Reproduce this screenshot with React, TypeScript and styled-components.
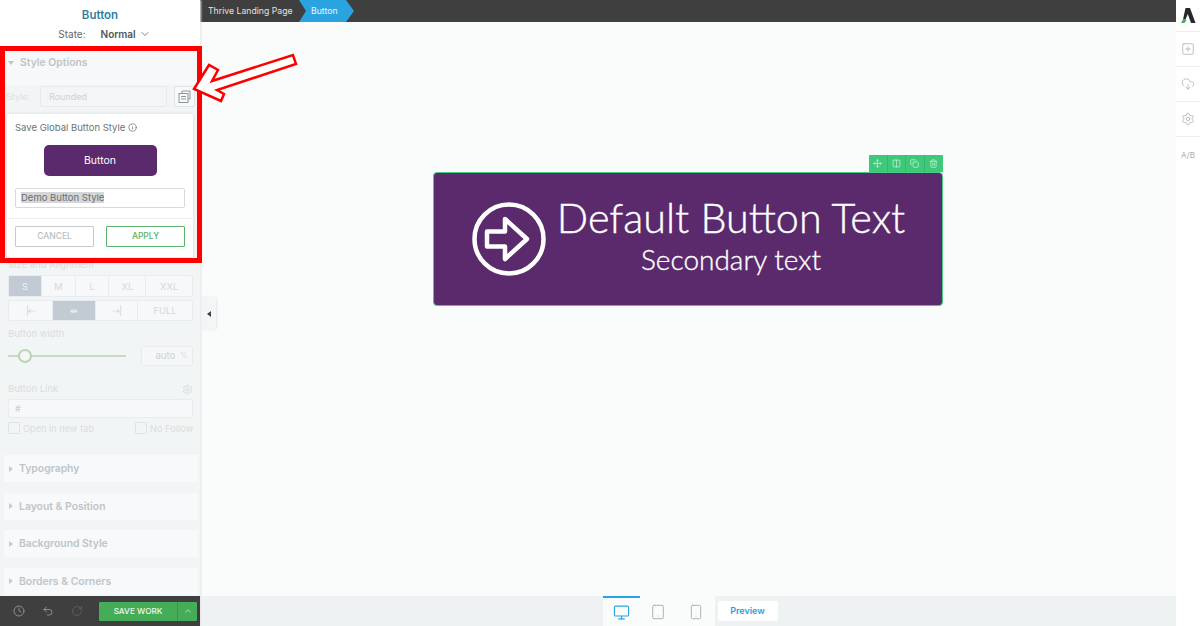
import React from "react";
import styled, { createGlobalStyle } from "styled-components";
import {
  ChevronDown, ChevronUp, Clock, Columns2, Copy, Info, Monitor, Move, RotateCw, Settings, Smartphone,
  SquarePlus, Tablet, Trash2, Undo2, CloudDownload,
} from "lucide-react";

const Global = createGlobalStyle`
  html, body { margin: 0; height: 100%; overflow: hidden; background: #fafbfb; }
  #root { height: 100%; }
  * { box-sizing: border-box; }
  body { font-family: "Inter", "Roboto", "Liberation Sans", sans-serif; }
`;

const Page = styled.div`
  display: flex;
  width: 1200px;
  height: 626px;
  position: relative;
  overflow: hidden;
`;

const Sidebar = styled.aside`
  width: 200px;
  flex: none;
  display: flex;
  flex-direction: column;
  background: #f2f5f5;
  position: relative;
  box-shadow: 1px 0 2px #e3e6e7;
  z-index: 2;
`;

const Header = styled.header`
  height: 46px;
  background: #fff;
  display: flex;
  flex-direction: column;
  align-items: center;
  padding-top: 9px;
  flex: none;
`;

const Title = styled.div`
  font-size: 11.5px;
  line-height: 13px;
  font-weight: 600;
  color: #2f7f9f;
`;

const StateRow = styled.div`
  display: flex;
  align-items: center;
  margin-top: 6px;
  font-size: 10px;
  line-height: 12px;
  color: #62686c;
  gap: 15px;
  padding-left: 9px;
  b {
    font-weight: 600;
    color: #50565a;
    display: inline-flex;
    align-items: center;
    gap: 3px;
  }
`;

const Scroll = styled.div`
  flex: 1;
  overflow: hidden;
  min-height: 0;
`;

const StylePanel = styled.section`
  background: #f6f8f9;
  margin: 4px 2px 0 4px;
  height: 35px;
  padding: 6px 0 0 4px;
`;

const PanelHead = styled.div`
  display: flex;
  align-items: center;
  gap: 6px;
  font-size: 10.4px;
  line-height: 13px;
  font-weight: 600;
  color: #bfc5c9;
`;

const Caret = styled.i<{ $open?: boolean }>`
  width: 0;
  height: 0;
  display: block;
  ${(p) =>
    p.$open
      ? "border-left: 3px solid transparent; border-right: 3px solid transparent; border-top: 4px solid #bfc5c9;"
      : "border-top: 3px solid transparent; border-bottom: 3px solid transparent; border-left: 4px solid #c6cbcf;"}
`;

const StyleRow = styled.div`
  display: flex;
  align-items: center;
  padding: 0 5px 0 6px;
  height: 22px;
`;

const FaintLabel = styled.span`
  font-size: 9px;
  color: #dde1e3;
  width: 34px;
`;

const FaintInput = styled.div`
  width: 127px;
  height: 21px;
  background: #f3f5f6;
  border: 1px solid #e7eaec;
  border-radius: 2px;
  font-size: 9px;
  line-height: 19px;
  padding-left: 8px;
  color: #ced3d6;
`;

const IconSquare = styled.div`
  width: 21px;
  height: 21px;
  margin-left: 7px;
  background: #f8f9fa;
  border: 1px solid #dfe3e5;
  border-radius: 2px;
  display: flex;
  align-items: center;
  justify-content: center;
  color: #8f969b;
`;

const Options = styled.div`
  padding: 0 7px 0 8px;
`;

const SpacerUnderPopup = styled.div`
  height: 152px;
`;

const FieldLabel = styled.div<{ $mt?: number }>`
  font-size: 9.5px;
  line-height: 12px;
  color: #d9dde0;
  display: flex;
  justify-content: space-between;
  align-items: center;
  margin-top: ${(p) => p.$mt ?? 0}px;
`;

const Segments = styled.div<{ $h: number; $mt: number }>`
  display: flex;
  height: ${(p) => p.$h}px;
  margin-top: ${(p) => p.$mt}px;
  background: #f6f8f9;
  border: 1px solid #e9ecee;
  border-radius: 2px;
`;

const Segment = styled.div<{ $w: number; $on?: boolean }>`
  width: ${(p) => p.$w}px;
  display: flex;
  align-items: center;
  justify-content: center;
  font-size: 9.5px;
  color: ${(p) => (p.$on ? "#eef1f3" : "#d5d9dc")};
  background: ${(p) => (p.$on ? "#c2cbd3" : "transparent")};
  border-right: 1px solid #e9ecee;
  &:last-child { border-right: 0; }
`;

const SliderRow = styled.div`
  display: flex;
  align-items: center;
  margin-top: 6px;
  height: 20px;
`;

const Track = styled.div`
  width: 118px;
  height: 2px;
  background: #c5dcc3;
  position: relative;
`;

const Knob = styled.span`
  position: absolute;
  left: 10px;
  top: -6px;
  width: 14px;
  height: 14px;
  border-radius: 50%;
  border: 2px solid #b9d4b7;
  background: #f5f7f7;
`;

const WidthBox = styled.div`
  margin-left: 15px;
  width: 52px;
  height: 20px;
  background: #f5f7f8;
  border: 1px solid #e9ecee;
  border-radius: 2px;
  font-size: 9.5px;
  line-height: 18px;
  color: #cdd2d5;
  display: flex;
  justify-content: flex-end;
  gap: 5px;
  padding-right: 5px;
  em { font-style: normal; font-size: 7px; color: #d8dcdf; }
`;

const LinkInput = styled.div`
  height: 19px;
  margin-top: 4px;
  background: #f6f8f9;
  border: 1px solid #e9ecee;
  border-radius: 2px;
  font-size: 9px;
  line-height: 17px;
  padding-left: 6px;
  color: #c9ced1;
`;

const CheckRow = styled.div`
  display: flex;
  justify-content: space-between;
  margin-top: 4px;
  font-size: 9.2px;
  color: #d9dde0;
  height: 12px;
  align-items: center;
`;

const Check = styled.span`
  display: inline-flex;
  align-items: center;
  gap: 3px;
  &::before {
    content: "";
    width: 10px;
    height: 10px;
    border: 1px solid #dfe3e5;
    border-radius: 1px;
  }
`;

const Collapsed = styled.section`
  height: 27px;
  margin: 0 2px 10.5px 4px;
  background: #f7f9fa;
  display: flex;
  align-items: center;
  padding-left: 5px;
`;

const CollapsedList = styled.div`
  margin-top: 21px;
`;

const Footer = styled.footer`
  height: 30px;
  flex: none;
  background: #3f3f3f;
  display: flex;
  align-items: center;
  padding-left: 13px;
  color: #8b8d8e;
  position: relative;
`;

const ToolIcon = styled.span<{ $dim?: boolean }>`
  width: 12px;
  height: 12px;
  margin-right: 17px;
  display: flex;
  color: ${(p) => (p.$dim ? "#5c5e5f" : "#8d9091")};
`;

const Save = styled.div`
  margin-left: -1px;
  width: 98px;
  height: 19px;
  background: #45ad57;
  border-radius: 1px;
  display: flex;
  color: #eef8ef;
  font-size: 8.2px;
  font-weight: 500;
  line-height: 19px;
`;

const SaveMain = styled.span`
  flex: 1;
  text-align: center;
`;

const SaveMore = styled.span`
  width: 20px;
  border-left: 1px solid #3a9449;
  display: flex;
  align-items: center;
  justify-content: center;
  color: #bfe3c5;
`;

const Popup = styled.div`
  position: absolute;
  left: 7px;
  top: 114px;
  width: 186px;
  height: 143px;
  background: #fff;
  box-shadow: 0 0 3px #d5d9db;
  padding: 7px 8px 0;
  z-index: 2;
`;

const PopupTitle = styled.div`
  font-size: 9.5px;
  line-height: 13px;
  color: #6d7376;
  display: flex;
  align-items: center;
  gap: 3px;
`;

const PreviewBtn = styled.div`
  width: 113px;
  height: 31px;
  margin: 11px auto 0;
  background: #5a2a6d;
  border-radius: 5px;
  color: #fff;
  font-size: 10.5px;
  line-height: 31px;
  text-align: center;
`;

const NameInput = styled.div`
  height: 20px;
  margin-top: 12px;
  border: 1px solid #d6dadc;
  border-radius: 2px;
  font-size: 9.5px;
  line-height: 18px;
  padding-left: 5px;
  color: #6a6f72;
  span { background: #d4d6d8; }
`;

const PopupRule = styled.div`
  height: 1px;
  background: #eceff0;
  margin: 10px -8px 0;
`;

const PopupActions = styled.div`
  display: flex;
  justify-content: space-between;
  margin-top: 7px;
`;

const ActionBtn = styled.div<{ $apply?: boolean }>`
  width: 79px;
  height: 21px;
  border: 1px solid ${(p) => (p.$apply ? "#5cb36b" : "#c6cacc")};
  border-radius: 1px;
  text-align: center;
  font-size: 8.5px;
  font-weight: 500;
  line-height: 19px;
  color: ${(p) => (p.$apply ? "#58b068" : "#b9bec1")};
`;

const Main = styled.main`
  flex: 1;
  min-width: 0;
  display: flex;
  flex-direction: column;
`;

const TopBar = styled.nav`
  height: 22px;
  flex: none;
  background: #3f3f3f;
  display: flex;
  align-items: center;
  padding-left: 8px;
  font-size: 8.7px;
  color: #e2e3e3;
`;

const Crumb = styled.span`
  width: 89px;
`;

const ActiveCrumb = styled.span`
  width: 55px;
  height: 22px;
  margin-left: 2px;
  background: #2aa4e0;
  color: #eef8fd;
  line-height: 22px;
  padding-left: 12px;
  clip-path: polygon(0 0, 47px 0, 100% 50%, 47px 100%, 0 100%, 7px 50%);
`;

const Canvas = styled.div`
  flex: 1;
  background: #fafbfb;
  display: flex;
  flex-direction: column;
  align-items: center;
  padding-top: 133px;
  position: relative;
`;

const CollapseTab = styled.div`
  position: absolute;
  left: 2px;
  top: 275px;
  width: 14px;
  height: 33px;
  background: #f3f5f6;
  border-radius: 0 4px 4px 0;
  box-shadow: 1px 0 2px #e4e7e8;
  display: flex;
  align-items: center;
  justify-content: center;
  &::before {
    content: "";
    border-top: 3px solid transparent;
    border-bottom: 3px solid transparent;
    border-right: 4px solid #3f4346;
  }
`;

const Selected = styled.div`
  position: relative;
  width: 510px;
  height: 134px;
  margin-top: 17px;
  background: #5a2a6d;
  border: 1px solid #45cc85;
  border-radius: 4px;
  color: #fff;
  display: flex;
  align-items: center;
  padding-left: 38px;
`;

const BarTools = styled.div`
  position: absolute;
  right: -1px;
  top: -18px;
  width: 74px;
  height: 17px;
  background: #3ec97a;
  border-radius: 1px 1px 0 0;
  display: grid;
  grid-template-columns: repeat(4, 1fr);
  color: #c4f0d6;
  span {
    display: flex;
    align-items: center;
    justify-content: center;
    border-right: 1px solid #35b86d;
  }
  span:last-child { border-right: 0; }
`;

const BigText = styled.div`
  margin-left: 12px;
  display: flex;
  flex-direction: column;
  align-items: center;
  width: 346px;
  font-family: "Lato", "Open Sans", sans-serif;
  margin-top: -10px;
`;

const Primary = styled.div`
  font-size: 41.3px;
  line-height: 48px;
  font-weight: 300;
  white-space: nowrap;
  -webkit-text-stroke: 0.4px #fff;
`;

const Secondary = styled.div`
  font-size: 28px;
  line-height: 32px;
  margin-top: 2px;
  font-weight: 300;
  white-space: nowrap;
  -webkit-text-stroke: 0.35px #fff;
`;

const BottomBar = styled.div`
  height: 30px;
  flex: none;
  background: #eef2f3;
  display: flex;
  justify-content: center;
  padding-left: 4px;
  gap: 3px;
`;

const Devices = styled.div`
  width: 112px;
  background: #fafbfb;
  display: flex;
  position: relative;
`;

const Device = styled.span<{ $on?: boolean }>`
  width: 37.3px;
  display: flex;
  align-items: center;
  justify-content: center;
  color: ${(p) => (p.$on ? "#2aa4e0" : "#a4a8ab")};
  border-top: 2px solid ${(p) => (p.$on ? "#2aa4e0" : "transparent")};
`;

const Preview = styled.div`
  width: 60px;
  height: 20px;
  margin-top: 5px;
  background: #fff;
  border-radius: 2px;
  text-align: center;
  font-size: 9px;
  font-weight: 600;
  line-height: 20px;
  color: #2b9fd6;
`;

const Rail = styled.aside`
  width: 24px;
  flex: none;
  background: #fff;
  display: flex;
  flex-direction: column;
`;

const RailItem = styled.div`
  height: 35px;
  display: flex;
  align-items: center;
  justify-content: center;
  color: #a9adb0;
  border-bottom: 1px solid #eceeef;
  font-size: 8px;
  &:first-child { height: 32px; }
  &:last-child { border-bottom: 0; }
`;

const Frame = styled.div`
  position: absolute;
  left: 0;
  top: 46px;
  width: 202px;
  height: 217px;
  border: 5px solid #fe0000;
  z-index: 3;
  pointer-events: none;
`;

const Arrow = styled.svg`
  position: absolute;
  left: 190px;
  top: 50px;
  z-index: 4;
`;

const AlignGlyph = styled.span<{ $on?: boolean }>`
  font-size: 9px;
  letter-spacing: -1px;
  color: ${(p) => (p.$on ? "#f0f3f4" : "#d0d4d7")};
`;

const panels = ["Typography", "Layout & Position", "Background Style", "Borders & Corners"];

export default function App() {
  return (
    <Page>
      <Global />
      <Sidebar>
        <Header>
          <Title>Button</Title>
          <StateRow>
            State:
            <b>
              Normal <ChevronDown size={12} strokeWidth={1.5} />
            </b>
          </StateRow>
        </Header>
        <Scroll>
          <StylePanel>
            <PanelHead>
              <Caret $open />
              Style Options
            </PanelHead>
          </StylePanel>
          <StyleRow>
            <FaintLabel>Style:</FaintLabel>
            <FaintInput>Rounded</FaintInput>
            <IconSquare>
              <svg width="13" height="13" viewBox="0 0 13 13" fill="none" stroke="currentColor" strokeWidth="1">
                <path d="M4 3V1h8v8h-2" />
                <rect x="1" y="3.500" width="9" height="9" />
                <path d="M3 6.500h5M3 9h5" />
              </svg>
            </IconSquare>
          </StyleRow>
          <SpacerUnderPopup />
          <Options>
            <FieldLabel>Size and Alignment</FieldLabel>
            <Segments $h={22} $mt={4}>
              <Segment $w={33} $on>S</Segment>
              <Segment $w={34}>M</Segment>
              <Segment $w={34}>L</Segment>
              <Segment $w={37}>XL</Segment>
              <Segment $w={46}>XXL</Segment>
            </Segments>
            <Segments $h={21} $mt={3}>
              <Segment $w={44}><AlignGlyph>|⇠</AlignGlyph></Segment>
              <Segment $w={43} $on><AlignGlyph $on>⇹</AlignGlyph></Segment>
              <Segment $w={43}><AlignGlyph>⇢|</AlignGlyph></Segment>
              <Segment $w={54}>FULL</Segment>
            </Segments>
            <FieldLabel $mt={7}>Button width</FieldLabel>
            <SliderRow>
              <Track><Knob /></Track>
              <WidthBox>auto <em>%</em></WidthBox>
            </SliderRow>
            <FieldLabel $mt={17}>
              Button Link
              <Settings size={11} color="#d5d9dc" />
            </FieldLabel>
            <LinkInput>#</LinkInput>
            <CheckRow>
              <Check>Open in new tab</Check>
              <Check>No Follow</Check>
            </CheckRow>
          </Options>
          <CollapsedList>
            {panels.map((p) => (
              <Collapsed key={p}>
                <PanelHead>
                  <Caret />
                  {p}
                </PanelHead>
              </Collapsed>
            ))}
          </CollapsedList>
        </Scroll>
        <Footer>
          <ToolIcon><Clock size={12} /></ToolIcon>
          <ToolIcon><Undo2 size={12} /></ToolIcon>
          <ToolIcon $dim><RotateCw size={12} /></ToolIcon>
          <Save>
            <SaveMain>SAVE WORK</SaveMain>
            <SaveMore><ChevronUp size={10} /></SaveMore>
          </Save>
        </Footer>
        <Popup>
          <PopupTitle>
            Save Global Button Style <Info size={9} />
          </PopupTitle>
          <PreviewBtn>Button</PreviewBtn>
          <NameInput><span>Demo Button Style</span></NameInput>
          <PopupRule />
          <PopupActions>
            <ActionBtn>CANCEL</ActionBtn>
            <ActionBtn $apply>APPLY</ActionBtn>
          </PopupActions>
        </Popup>
      </Sidebar>
      <Main>
        <TopBar>
          <Crumb>Thrive Landing Page</Crumb>
          <ActiveCrumb>Button</ActiveCrumb>
        </TopBar>
        <Canvas>
          <CollapseTab />
          <Selected>
            <BarTools>
              <span><Move size={9} /></span>
              <span><Columns2 size={9} /></span>
              <span><Copy size={9} /></span>
              <span><Trash2 size={9} /></span>
            </BarTools>
            <svg width="74" height="74" viewBox="0 0 74 74" fill="none" stroke="#fff" strokeWidth="4.5" strokeLinejoin="round">
              <circle cx="37" cy="37" r="34.5" />
              <path d="M15 29.500H33V17L55 37 33 57V44.500H15z" />
            </svg>
            <BigText>
              <Primary>Default Button Text</Primary>
              <Secondary>Secondary text</Secondary>
            </BigText>
          </Selected>
        </Canvas>
        <BottomBar>
          <Devices>
            <Device $on><Monitor size={17} strokeWidth={1.6} /></Device>
            <Device><Tablet size={16} strokeWidth={1.3} /></Device>
            <Device><Smartphone size={16} strokeWidth={1.3} /></Device>
          </Devices>
          <Preview>Preview</Preview>
        </BottomBar>
      </Main>
      <Rail>
        <RailItem>
          <svg width="16" height="17" viewBox="0 0 16 17">
            <path d="M5.500 1h4.500L15.500 16h-4.500L7.800 7 5.500 12.500H3z" fill="#25282a" />
            <path d="M1 16l2.500-4.500 3 1.500L4.500 16z" fill="#45ad57" />
          </svg>
        </RailItem>
        <RailItem><SquarePlus size={14} strokeWidth={1.3} /></RailItem>
        <RailItem><CloudDownload size={14} strokeWidth={1.3} /></RailItem>
        <RailItem><Settings size={14} strokeWidth={1.3} /></RailItem>
        <RailItem>A/B</RailItem>
      </Rail>
      <Frame />
      <Arrow width="110" height="55" viewBox="190 50 110 55">
        <polygon
          points="194,89 209,65 218,70 212,81 293,55 296,64 217,90 224,94 221,101"
          fill="#fff"
          stroke="#fe0000"
          strokeWidth="2.5"
        />
      </Arrow>
    </Page>
  );
}
